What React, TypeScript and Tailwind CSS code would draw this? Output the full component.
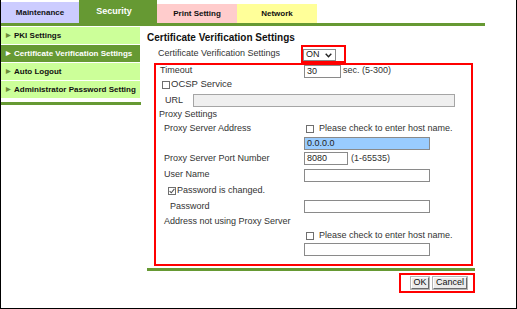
import React from 'react';

const green = 'bg-[#669933]';

function CheckBox({ checked = false }: { checked?: boolean }) {
  return (
    <span className="inline-flex w-[8px] h-[8px] shrink-0 items-center justify-center border border-[#6f6f6f] bg-white">
      {checked && (
        <svg width="6" height="6" viewBox="0 0 6 6">
          <path d="M0.6 3.1 L2.3 4.8 L5.4 0.9" fill="none" stroke="#555" strokeWidth="1.1" />
        </svg>
      )}
    </span>
  );
}

function Field({ w, value = '', blue = false }: { w: string; value?: string; blue?: boolean }) {
  return (
    <div
      className={`${w} h-[13px] border border-[#8a8a8a] ${blue ? 'bg-[#99ccff]' : 'bg-white'} pl-[2px] text-[9px] leading-[11px] text-[#222]`}
    >
      {value}
    </div>
  );
}

function SideItem({ label, active = false }: { label: string; active?: boolean }) {
  return (
    <div
      className={`flex h-[18px] w-[139px] items-center border-b border-white pl-[5px] text-[8px] font-bold ${
        active ? 'bg-[#669933] text-white' : 'bg-[#ccff99] text-[#111]'
      }`}
    >
      <span className={`mr-[3px] text-[6px] ${active ? 'text-white' : 'text-[#6b8b3b]'}`}>▶</span>
      {label}
    </div>
  );
}

function Row({ h, children }: { h: string; children: React.ReactNode }) {
  return <div className={`flex ${h} items-center`}>{children}</div>;
}

export default function App() {
  return (
    <div className="h-[309px] w-[517px] overflow-hidden border-x border-b border-black bg-white font-['Liberation_Sans',Arial,sans-serif] text-[#333]">
      {/* tabs */}
      <div className="flex h-[23px] items-end">
        <div className="flex h-[21px] w-[78px] items-center justify-center bg-[#ccccff] text-[8px] font-bold text-[#111]">
          Maintenance
        </div>
        <div className={`flex h-[23px] w-[78px] items-center justify-center pr-[8px] pt-[1px] ${green} text-[9px] font-bold text-white`}>
          Security
        </div>
        <div className="flex h-[19px] w-[80px] items-center justify-center bg-[#ffcccc] text-[8px] font-bold text-[#111]">
          Print Setting
        </div>
        <div className="flex h-[19px] w-[80px] items-center justify-center bg-[#ffff99] text-[8px] font-bold text-[#111]">
          Network
        </div>
      </div>
      <div className={`h-[3px] w-[484px] ${green}`} />

      <div className="flex">
        {/* sidebar */}
        <div className="w-[140px] pt-[1px]">
          <SideItem label="PKI Settings" />
          <SideItem label="Certificate Verification Settings" active />
          <SideItem label="Auto Logout" />
          <SideItem label="Administrator Password Setting" />
          <div className={`mt-[3px] h-[3px] w-[140px] ${green}`} />
        </div>

        {/* content */}
        <div className="ml-[6px] w-[328px]">
          <div className="mt-[5px] h-[14px] text-[10px] font-bold leading-[14px] text-[#111]">
            Certificate Verification Settings
          </div>
          <div className="flex h-[18px] items-center text-[9px]">
            <div className="w-[154px] pl-[11px]">Certificate Verification Settings</div>
            <div className="h-[18px] w-[45px] border-2 border-[#ff0000] pt-[2px]">
              <div className="flex h-[12px] w-[33px] items-center justify-between border border-[#8a8a8a] bg-white pl-[2px] pr-[3px] text-[9px] text-[#222]">
                ON
                <svg width="7" height="5" viewBox="0 0 7 5">
                  <path d="M0.7 0.8 L3.5 3.8 L6.3 0.8" fill="none" stroke="#222" strokeWidth="1.4" />
                </svg>
              </div>
            </div>
          </div>

          <div className="ml-[7px] w-[319px] border-2 border-[#ff0000] pb-[7px] text-[9px]">
            <Row h="h-[12px]">
              <div className="w-[148px] pl-[4px]">Timeout</div>
              <Field w="w-[37px]" value="30" />
              <span className="ml-[2px]">sec. (5-300)</span>
            </Row>
            <Row h="h-[15px]">
              <div className="flex items-center pl-[6px]">
                <CheckBox />
                <span className="ml-[1px] text-[9.5px]">OCSP Service</span>
              </div>
            </Row>
            <Row h="h-[17px]">
              <div className="w-[37px] pl-[9px]">URL</div>
              <div className="h-[13px] w-[262px] border border-[#a5a5a5] bg-[#efefef]" />
            </Row>
            <Row h="h-[12px]">
              <div className="pl-[3px]">Proxy Settings</div>
            </Row>
            <Row h="h-[15px]">
              <div className="w-[150px] pl-[8px]">Proxy Server Address</div>
              <CheckBox />
              <span className="ml-[5px]">Please check to enter host name.</span>
            </Row>
            <Row h="h-[15px]">
              <div className="w-[148px]" />
              <Field w="w-[126px]" value="0.0.0.0" blue />
            </Row>
            <Row h="h-[15px]">
              <div className="w-[148px] pl-[8px]">Proxy Server Port Number</div>
              <Field w="w-[44px]" value="8080" />
              <span className="ml-[3px]">(1-65535)</span>
            </Row>
            <Row h="h-[18px]">
              <div className="w-[148px] pl-[8px]">User Name</div>
              <Field w="w-[126px]" />
            </Row>
            <Row h="h-[14px]">
              <div className="flex items-center pl-[12px]">
                <CheckBox checked />
                <span className="ml-[1px]">Password is changed.</span>
              </div>
            </Row>
            <Row h="h-[17px]">
              <div className="w-[148px] pl-[14px]">Password</div>
              <Field w="w-[126px]" />
            </Row>
            <Row h="h-[14px]">
              <div className="pl-[8px]">Address not using Proxy Server</div>
            </Row>
            <Row h="h-[13px]">
              <div className="w-[150px]" />
              <CheckBox />
              <span className="ml-[5px]">Please check to enter host name.</span>
            </Row>
            <Row h="h-[15px]">
              <div className="w-[148px]" />
              <Field w="w-[126px]" />
            </Row>
          </div>

          <div className={`mt-[2px] h-[3px] w-[328px] ${green}`} />

          <div className="ml-[252px] mt-[2px] flex h-[20px] w-[76px] items-center gap-[4px] border-2 border-[#ff0000] pl-[10px]">
            <div className="flex h-[12px] w-[18px] items-center justify-center border border-b-[#6a6a6a] border-l-white border-r-[#6a6a6a] border-t-white bg-[#ececec] text-[9px] text-[#111] shadow-[0_0_0_1px_#b5b5b5]">
              OK
            </div>
            <div className="flex h-[12px] w-[34px] items-center justify-center border border-b-[#6a6a6a] border-l-white border-r-[#6a6a6a] border-t-white bg-[#ececec] text-[9px] text-[#111] shadow-[0_0_0_1px_#b5b5b5]">
              Cancel
            </div>
          </div>
        </div>
      </div>
    </div>
  );
}
